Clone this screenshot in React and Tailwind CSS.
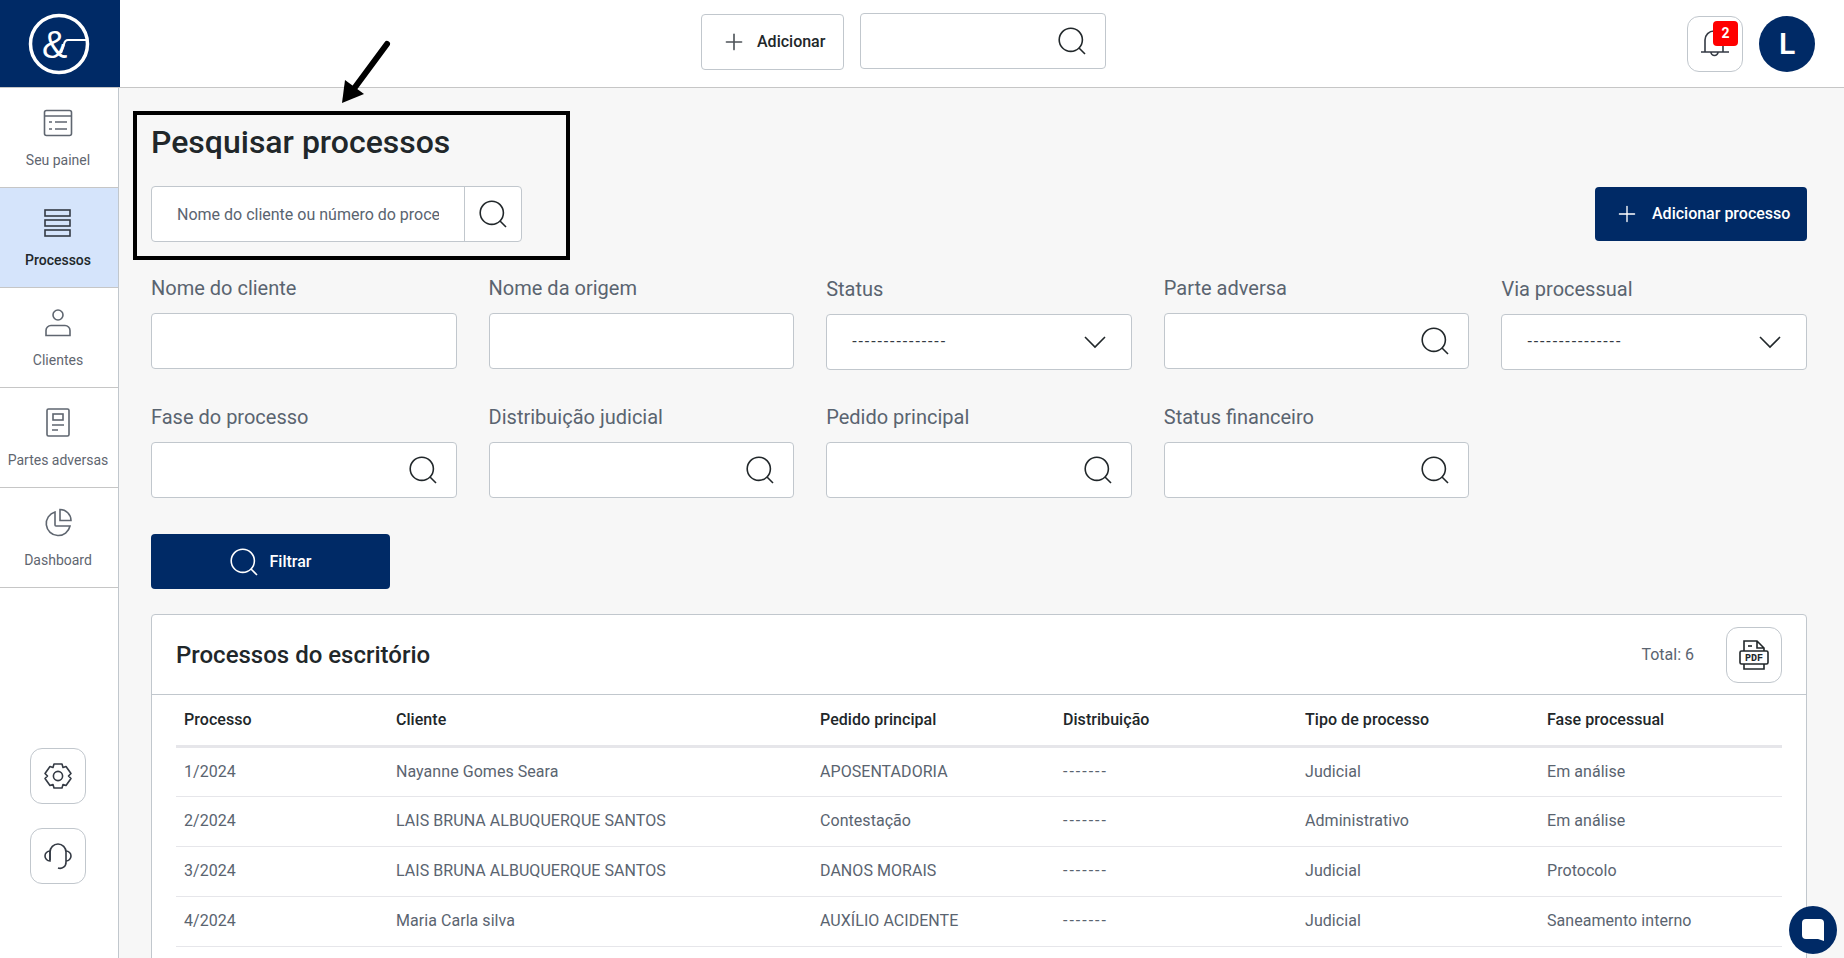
import { Plus } from 'lucide-react';

const navy = 'bg-[#002a66]';

function SearchIcon({ className = 'text-[#21272a]' }) {
  return (
    <svg width="28" height="28" viewBox="0 0 28 28" fill="none" stroke="currentColor" strokeWidth="1.6" className={className}>
      <circle cx="12.8" cy="12.8" r="11.6" />
      <path d="M21 21l6 6" />
    </svg>
  );
}

function Chevron() {
  return (
    <svg width="24" height="14" viewBox="0 0 24 14" fill="none" stroke="#21272a" strokeWidth="1.6">
      <path d="M2 2l10 10L22 2" />
    </svg>
  );
}

function PainelIcon() {
  return (
    <svg width="30" height="28" viewBox="0 0 30 28" fill="none" stroke="#5f6670" strokeWidth="1.6">
      <rect x="1.5" y="1.5" width="27" height="25" rx="2" />
      <path d="M1.5 7h27M6 13h3M12 13h12M6 20h3M12 20h12" />
    </svg>
  );
}

function ProcessosIcon() {
  return (
    <svg width="28" height="28" viewBox="0 0 28 28" fill="none" stroke="#343a44" strokeWidth="1.6">
      <rect x="1" y="1" width="25" height="6" />
      <rect x="1" y="11" width="25" height="6" />
      <rect x="1" y="21" width="25" height="6" />
    </svg>
  );
}

function ClienteIcon() {
  return (
    <svg width="28" height="28" viewBox="0 0 28 28" fill="none" stroke="#5f6670" strokeWidth="1.6">
      <circle cx="14" cy="6" r="5" />
      <path d="M2 26.5v-5a5 5 0 0 1 5-5h14a5 5 0 0 1 5 5v5z" />
    </svg>
  );
}

function PartesIcon() {
  return (
    <svg width="24" height="30" viewBox="0 0 24 30" fill="none" stroke="#5f6670" strokeWidth="1.6">
      <rect x="1" y="1" width="22" height="27" rx="1.5" />
      <rect x="7" y="6" width="10" height="6" />
      <path d="M6 17h12M6 22h6" />
    </svg>
  );
}

function DashboardIcon() {
  return (
    <svg width="30" height="30" viewBox="0 0 30 30" fill="none" stroke="#5f6670" strokeWidth="1.6">
      <path d="M12 4a12 12 0 1 0 15 14H13a1 1 0 0 1-1-1z" />
      <path d="M17 1.5a11 11 0 0 1 11 11H17z" />
    </svg>
  );
}

function GearIcon() {
  return (
    <svg width="30" height="28" viewBox="0 0 30 28" fill="none" stroke="#343a44" strokeWidth="1.6">
      <circle cx="15" cy="14" r="4.6" />
      <path d="M11 2h8l1 3.5 3-1 5 7-2.5 2.5 2.500 2.500-5 7-3-1-1 3.500h-8l-1-3.500-3 1-5-7L4.500 14 2 11.500l5-7 3 1z" strokeLinejoin="round" />
    </svg>
  );
}

function HeadsetIcon() {
  return (
    <svg width="30" height="30" viewBox="0 0 30 30" fill="none" stroke="#343a44" strokeWidth="1.6">
      <path d="M7 19V11a8 8 0 0 1 16 0v10a6 6 0 0 1-8 6" />
      <path d="M7 10a5 5 0 0 0 0 10zM23 10a5 5 0 0 1 0 10" />
    </svg>
  );
}

function BellIcon() {
  return (
    <svg width="30" height="30" viewBox="0 0 30 30" fill="none" stroke="#343a44" strokeWidth="1.6">
      <path d="M1 23h28M5 23V11a9 9 0 0 1 18 0v12" />
      <path d="M11 23a3.500 3.500 0 0 0 7 0" />
    </svg>
  );
}

function PdfIcon() {
  return (
    <svg width="30" height="30" viewBox="0 0 30 30" fill="none" stroke="#21272a" strokeWidth="1.6">
      <path d="M5 11V1h13l7 7v3M5 24v5h20v-5M18 1v7h7" />
      <rect x="1" y="11" width="28" height="13" rx="1.5" />
      <path d="M9 6h4" />
      <text x="15" y="21" textAnchor="middle" fill="#21272a" stroke="none" fontSize="10" fontWeight="700" fontFamily="'Liberation Mono', monospace">PDF</text>
    </svg>
  );
}

function Logo() {
  return (
    <svg width="64" height="64" viewBox="0 0 64 64" fill="none" className="text-white">
      <circle cx="32" cy="32" r="28.500" stroke="currentColor" strokeWidth="3.500" />
      <text x="15" y="45.500" fill="currentColor" fontSize="38" fontFamily="'Liberation Sans', sans-serif">&amp;</text>
      <path d="M60 28H41q-3 0-4 4l-3 9" stroke="currentColor" strokeWidth="2.200" />
    </svg>
  );
}

function Arrow() {
  return (
    <svg width="50" height="66" viewBox="0 0 50 66" className="absolute left-[222px] top-[-48px]">
      <path d="M46 4L12 50" stroke="#000" strokeWidth="6" strokeLinecap="round" />
      <path d="M1 63L4 40l19 14z" fill="#000" />
    </svg>
  );
}

const navItems = [
  { label: 'Seu painel', icon: <PainelIcon /> },
  { label: 'Processos', icon: <ProcessosIcon />, active: true },
  { label: 'Clientes', icon: <ClienteIcon /> },
  { label: 'Partes adversas', icon: <PartesIcon /> },
  { label: 'Dashboard', icon: <DashboardIcon /> },
];

const rows = [
  ['1/2024', 'Nayanne Gomes Seara', 'APOSENTADORIA', '-------', 'Judicial', 'Em análise'],
  ['2/2024', 'LAIS BRUNA ALBUQUERQUE SANTOS', 'Contestação', '-------', 'Administrativo', 'Em análise'],
  ['3/2024', 'LAIS BRUNA ALBUQUERQUE SANTOS', 'DANOS MORAIS', '-------', 'Judicial', 'Protocolo'],
  ['4/2024', 'Maria Carla silva', 'AUXÍLIO ACIDENTE', '-------', 'Judicial', 'Saneamento interno'],
];

function Field({ label, type }) {
  const isSelect = type === 'select';
  return (
    <div className={isSelect ? 'pt-px' : ''}>
      <div className="h-[24px] text-[20px] leading-[24px] text-[#5a6470]">{label}</div>
      <div className={`mt-[13px] flex h-[56px] items-center justify-between rounded border border-[#c1c7cd] bg-white ${isSelect ? 'pl-[25px] pr-[24px]' : 'pr-[19px]'}`}>
        {isSelect && <span className="text-[16px] tracking-[1.9px] text-[#343a44]">---------------</span>}
        {isSelect && <Chevron />}
        {type === 'search' && <span className="ml-auto flex"><SearchIcon /></span>}
      </div>
    </div>
  );
}

export default function App() {
  return (
    <div className="flex h-screen flex-col overflow-hidden bg-[#f7f7f7] font-['Roboto',sans-serif]">
      <header className="flex h-[88px] shrink-0 items-center border-b border-[#c6c6c6] bg-white pr-[29px]">
        <div className={`flex h-[87px] w-[120px] shrink-0 items-center justify-center self-start pr-[3px] ${navy}`}>
          <Logo />
        </div>
        <div className="ml-[581px] flex items-start gap-[16px] self-start pt-[13px]">
          <button className="mt-px flex h-[56px] w-[143px] items-center gap-[10px] rounded border border-[#c1c7cd] pl-[19px] text-[16px] font-medium text-[#21272a]">
            <Plus size={26} strokeWidth={1.5} className="text-[#4d5358]" />
            Adicionar
          </button>
          <div className="flex h-[56px] w-[246px] items-center justify-end rounded border border-[#c1c7cd] pr-[19px]">
            <SearchIcon />
          </div>
        </div>
        <div className="ml-auto flex items-center gap-[16px]">
          <div className="relative flex size-[56px] items-center justify-center rounded-xl border border-[#c1c7cd]">
            <BellIcon />
            <span className="absolute left-[25px] top-[4px] flex size-[25px] items-center justify-center rounded bg-[#ff0000] text-[14px] font-bold text-white">2</span>
          </div>
          <div className={`flex size-[56px] items-center justify-center rounded-full text-[30px] font-semibold text-white ${navy}`}>L</div>
        </div>
      </header>

      <div className="flex min-h-0 flex-1">
        <aside className="flex w-[119px] shrink-0 flex-col border-r border-[#c1c7cd] bg-white">
          {navItems.map((item) => (
            <div key={item.label} className={`flex h-[100px] flex-col items-center border-b border-[#c6c6c6] pr-[2px] pt-[20px] ${item.active ? 'bg-[#d5e4fb]' : ''}`}>
              <div className="flex h-[30px] items-center justify-center">{item.icon}</div>
              <span className={`mt-[12px] text-[14px] leading-[20px] ${item.active ? 'font-medium text-[#21272a]' : 'text-[#5f6670]'}`}>{item.label}</span>
            </div>
          ))}
          <div className="mt-[160px] flex flex-col items-center gap-[24px] pr-[3px]">
            <div className="flex size-[56px] items-center justify-center rounded-xl border border-[#c1c7cd]"><GearIcon /></div>
            <div className="flex size-[56px] items-center justify-center rounded-xl border border-[#c1c7cd]"><HeadsetIcon /></div>
          </div>
        </aside>

        <main className="relative min-w-0 flex-1 pl-[32px] pr-[37px] pt-[35px]">
          <Arrow />
          <div className="absolute left-[14px] top-[23px] h-[149px] w-[437px] border-4 border-black" />

          <div className="flex items-end justify-between">
            <div>
              <h1 className="text-[32px] font-medium leading-[38px] text-[#21272a]">Pesquisar processos</h1>
              <div className="mt-[25px] flex h-[56px] w-[371px] rounded border border-[#c1c7cd] bg-white">
                <input
                  readOnly
                  placeholder="Nome do cliente ou número do processo"
                  className="min-w-0 flex-1 bg-transparent pl-[25px] pr-[25px] pt-[2px] text-[16px] outline-none placeholder:text-[#5a6470]"
                />
                <div className="flex w-[57px] items-center justify-center border-l border-[#c1c7cd]"><SearchIcon /></div>
              </div>
            </div>
            <button className={`mb-px flex h-[54px] w-[212px] items-center gap-[12px] rounded pl-[19px] text-[16px] font-medium text-white ${navy}`}>
              <Plus size={26} strokeWidth={1.25} />
              Adicionar processo
            </button>
          </div>

          <div className="mt-[34px] grid grid-cols-5 gap-x-[32px] gap-y-[35px]">
            <Field label="Nome do cliente" />
            <Field label="Nome da origem" />
            <Field label="Status" type="select" />
            <Field label="Parte adversa" type="search" />
            <Field label="Via processual" type="select" />
            <Field label="Fase do processo" type="search" />
            <Field label="Distribuição judicial" type="search" />
            <Field label="Pedido principal" type="search" />
            <Field label="Status financeiro" type="search" />
          </div>

          <button className={`mt-[36px] flex h-[55px] w-[239px] items-center justify-center gap-[12px] rounded text-[16px] font-medium text-white ${navy}`}>
            <SearchIcon className="text-white" />
            Filtrar
          </button>

          <section className="mt-[25px] rounded-t border border-[#c1c7cd] bg-white">
            <div className="flex h-[80px] items-center border-b border-[#c1c7cd] pl-[24px] pr-[24px]">
              <h2 className="text-[24px] font-medium text-[#21272a]">Processos do escritório</h2>
              <span className="ml-auto mr-[32px] text-[16px] text-[#5a6470]">Total: 6</span>
              <div className="flex size-[56px] items-center justify-center rounded-xl border border-[#c1c7cd]"><PdfIcon /></div>
            </div>
            <div className="px-[24px] pb-[60px]">
              <table className="w-full table-fixed text-left text-[16px] tracking-[0.05px]">
                <thead>
                  <tr className="h-[51px] border-b-[3px] border-[#e6e6ea] text-[#21272a]">
                    <th className="w-[212px] pl-[8px] font-medium">Processo</th>
                    <th className="w-[424px] pl-[8px] font-medium">Cliente</th>
                    <th className="w-[243px] pl-[8px] font-medium">Pedido principal</th>
                    <th className="w-[242px] pl-[8px] font-medium">Distribuição</th>
                    <th className="w-[242px] pl-[8px] font-medium">Tipo de processo</th>
                    <th className="pl-[8px] font-medium">Fase processual</th>
                  </tr>
                </thead>
                <tbody>
                  {rows.map((row) => (
                    <tr key={row[0]} className="h-[50px] border-b border-[#e6e6ea] text-[#5a6470]">
                      {row.map((cell, i) => (
                        <td key={i} className={`pl-[8px] ${i === 3 ? 'tracking-[2px]' : ''}`}>{cell}</td>
                      ))}
                    </tr>
                  ))}
                </tbody>
              </table>
            </div>
          </section>

          <div className={`fixed bottom-[4px] right-[7px] flex size-[48px] items-center justify-center rounded-full ${navy}`}>
            <svg width="22" height="22" viewBox="0 0 22 22" fill="#fff">
              <path d="M4 0h14a4 4 0 0 1 4 4v18l-6-2H4a4 4 0 0 1-4-4V4a4 4 0 0 1 4-4z" />
            </svg>
          </div>
        </main>
      </div>
    </div>
  );
}
